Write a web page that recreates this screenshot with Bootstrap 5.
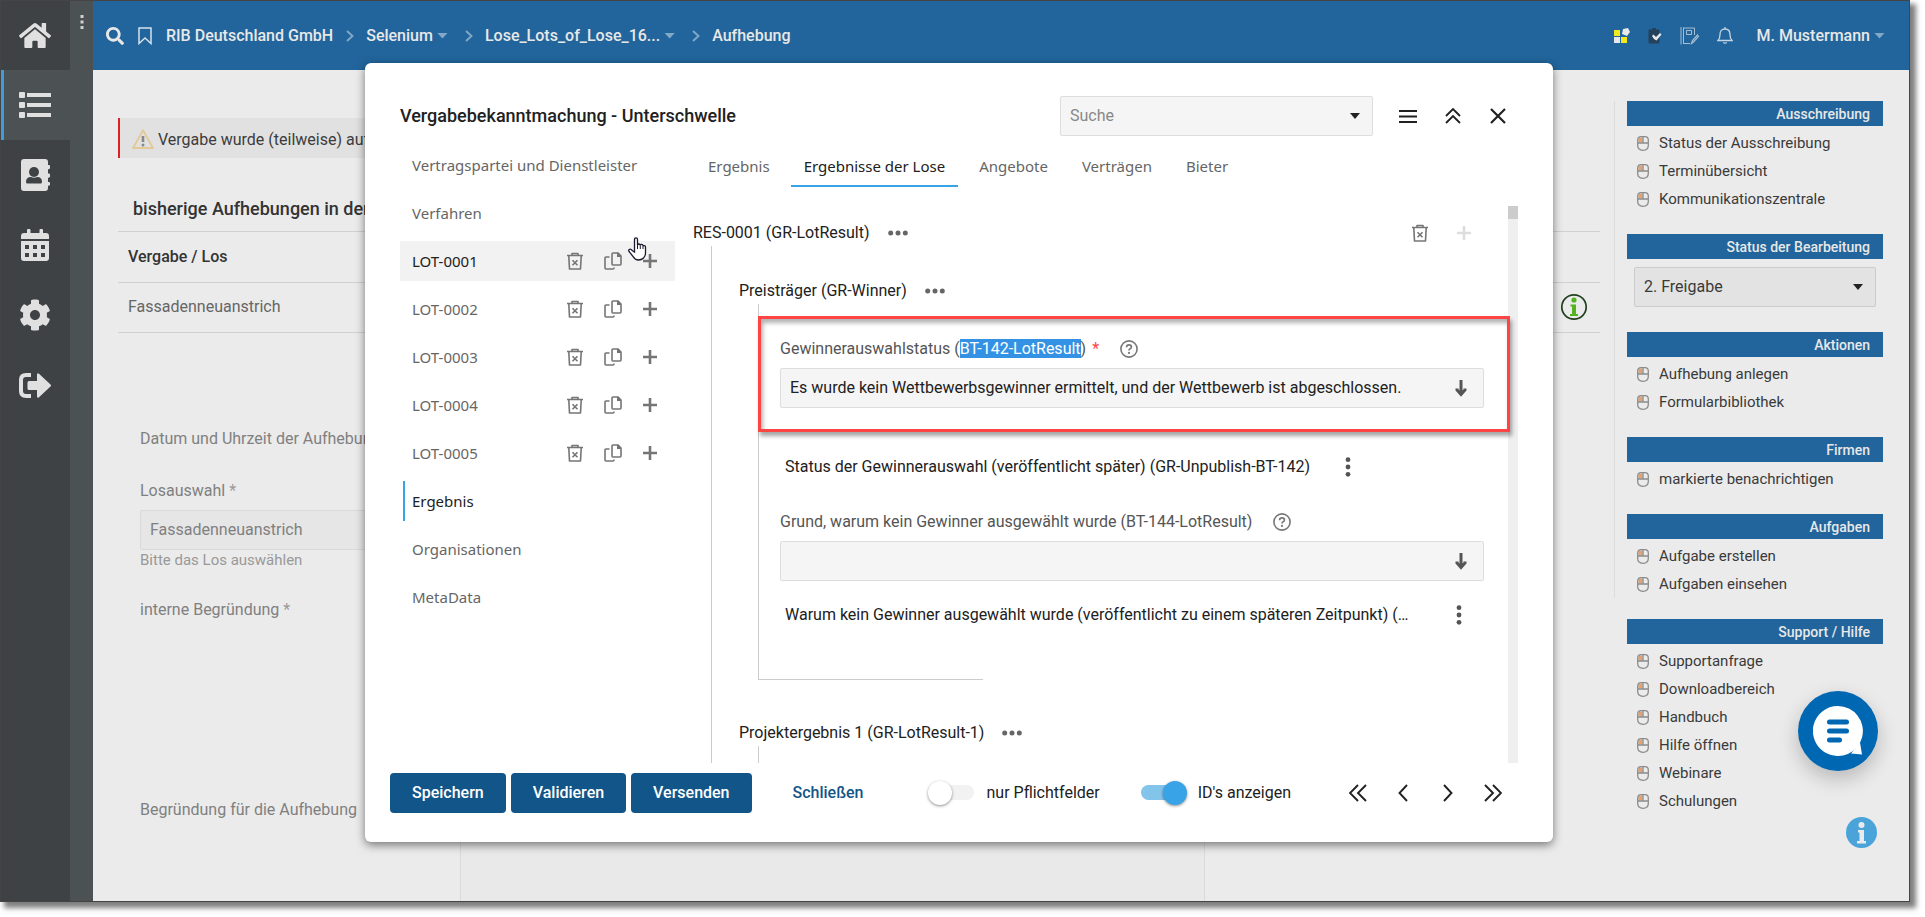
<!DOCTYPE html>
<html lang="de">
<head>
<meta charset="utf-8">
<meta name="viewport" content="width=device-width, initial-scale=1">
<title>Vergabebekanntmachung - Unterschwelle</title>
<link href="https://cdn.jsdelivr.net/npm/bootstrap@5.3.0/dist/css/bootstrap.min.css" rel="stylesheet">
<style>
  :root { --brand: #21659c; --deep: #125588; --sky: #38a3e6; }
  body { font: 400 16px/20px Roboto, sans-serif; color: #212121; background: #fff; }
  a { color: inherit; text-decoration: none; }
  svg { display: block; flex: none; }
  button { border: 0; background: none; padding: 0; color: inherit; }

  .app { position: relative; min-height: calc(100vh - 15px); margin: 0 15px 15px 0; border: 1px solid #444; background: #ebebeb; box-shadow: 5px 5px 5px 1px rgba(0,0,0,.5); }
  .rail { width: 69px; background: #3e4244; color: #e0e0e0; }
  .rail a { height: 70px; border-left: 3px solid transparent; padding-right: 4px; }
  .rail a:first-child { height: 69px; }
  .rail a.current { background: #4c5154; border-color: #419dd8; }
  .grip { width: 23px; background: #4c5154; color: #d0d0d0; padding-top: 14px; }
  .main-col { min-width: 0; }
  .topbar { height: 69px; background: var(--brand); color: #e8e8e8; padding: 0 24px 0 13px; font-weight: 500; }
  .crumbs { gap: 12px; }
  .crumbs > a { margin-right: 1px; }
  .tri { width: 11px; height: 6px; background: #82a8c8; clip-path: polygon(0 0, 100% 0, 50% 100%); }
  .toolset { gap: 18px; }

  .content { padding: 48px 14px 0 25px; }
  .notice { height: 40px; border-left: 2px solid #e02020; padding: 2px 0 0 12px; background: linear-gradient(90deg, #e1e1e1 40%, #ebebeb 98%); color: #3c3c3c; }
  .notice span { padding-top: 2px; }
  .content h2 { font: 500 18px/24px Roboto, sans-serif; color: #333; margin: 39px 0 0; padding: 0 0 10px 15px; border-bottom: 1px solid #d0d0d0; }
  .awards { color: #666; margin: 0; }
  .awards th, .awards td { height: 50px; padding: 0 10px; border-bottom: 1px solid #d0d0d0; vertical-align: middle; background: none; }
  .awards th { color: #333; font-weight: 500; }
  .awards td { color: #666; padding-right: 12px; }
  .form-a { flex: 308 1 0; min-width: 0; padding: 96px 12px 0 22px; border-right: 1px solid #dadada; color: #808080; white-space: nowrap; }
  .form-b { flex: 743 1 0; background: #e9e9e9; border-right: 1px solid #dadada; }
  .form-c { flex: 395 1 0; }
  .form-a .when { margin-bottom: 32px; }
  .form-a label { display: block; margin-bottom: 9px; }
  .form-a .tip { font-size: 15px; color: #999; margin-bottom: 30px; }
  .form-a .reason { margin-bottom: 180px; }
  .pick { height: 40px; padding: 0 40px 0 9px; border: 1px solid #ddd; border-radius: 2px; background-color: #f5f5f5; color: #212121; font-size: 16px; line-height: 20px; background-size: 12px 18px; background-position: right 16px center;
    background-image: url("data:image/svg+xml,%3Csvg xmlns='http://www.w3.org/2000/svg' viewBox='0 0 12 18'%3E%3Cpath d='M6 1v13M2 9.500v1.500l4 4.500 4-4.500v-1.500' fill='none' stroke='%23555' stroke-width='3'/%3E%3C/svg%3E"); }
  .pick-tri { background-size: 10px 6px; background-position: right 12px center; background-image: url("data:image/svg+xml,%3Csvg xmlns='http://www.w3.org/2000/svg' viewBox='0 0 10 6'%3E%3Cpath d='M0 0h10L5 6z' fill='%23222'/%3E%3C/svg%3E"); }
  .form-a .pick { background-color: #e6e6e6; border-color: #d9d9d9; color: #808080; background-image: none; }

  .side { width: 295px; padding: 31px 26px 0 0; color: #3a3a3a; font-size: 15px; }
  .side-main { border-left: 1px solid #dcdcdc; padding-left: 12px; }
  .side-rest { padding: 8px 0 0 13px; }
  .side h3 { font: 500 14px/27px Roboto, sans-serif; height: 25px; background: var(--brand); color: #e8e8e8; text-align: right; padding-right: 13px; margin: 0; }
  .side ul { list-style: none; margin: 0 0 21px; padding: 3px 0 0 10px; }
  .side .tight { margin-bottom: 13px; }
  .side li a { display: flex; align-items: center; gap: 10px; height: 28px; }
  .side .pick { width: 242px; margin: 8px 0 25px 7px; background-color: #e3e3e3; border-color: #ccc; color: #3a3a3a; }
  .chat { position: absolute; right: 31px; bottom: 130px; width: 80px; height: 80px; border-radius: 50%; background: #0067b3; box-shadow: 0 8px 20px rgba(0,0,0,.22); }
  .hint { position: absolute; right: 32px; bottom: 53px; }

  .stage { position: absolute; inset: 0; padding: 62px 0 59px 8px; }
  .sheet { width: 1188px; max-width: 94%; background: #fff; border-radius: 6px; box-shadow: 0 3px 10px rgba(0,0,0,.5); padding-bottom: 29px; }
  .sheet-head { padding: 33px 33px 0 35px; }
  .sheet-head h1 { font: 500 18px/24px Roboto, sans-serif; margin: 0; }
  .tool { width: 45px; height: 40px; display: flex; align-items: center; justify-content: center; }
  .sheet-head .pick { width: 313px; margin-right: 12px; color: #888; }
  .sheet-body { padding: 9px 35px 0 35px; gap: 18px; }
  .steps { width: 275px; font-family: "Noto Sans", sans-serif; font-size: 15px; color: #666; }
  .steps > div { height: 40px; margin-bottom: 8px; padding: 0 18px 1px 12px; position: relative; }
  .steps .hover { background: #f2f2f2; color: #212121; }
  .steps .here { color: #212121; }
  .steps .here::before { content: ""; position: absolute; left: 3px; top: 0; width: 2px; height: 40px; background: var(--sky); }
  .acts { gap: 21px; color: #757575; }
  .hand { position: absolute; left: 227px; top: -4px; }
  .tabbar { padding: 2px 0 0 2px; gap: 8px; font-family: "Noto Sans", sans-serif; font-size: 15px; color: #666; }
  .tabbar a { height: 40px; line-height: 38px; padding: 0 13px; border-bottom: 2px solid transparent; }
  .tabbar a.on { color: #212121; border-color: var(--sky); }
  .pane { margin-top: 19px; padding-top: 0; }
  .track { width: 10px; background: #efefef; }
  .thumb { height: 13px; background: #ccc; }
  .group { height: 28px; gap: 18px; padding-top: 2px; }
  .top-group { margin-top: 12px; }
  .next-group { margin-top: 38px; }
  .grey { color: #757575; }
  .pale { color: #ddd; margin: 0 37px 0 11px; }
  .lvl1 { margin-left: 18px; border-left: 1px solid #ccc; padding-top: 30px; }
  .lvl1 > .group { padding-left: 27px; }
  .lvl2 { margin-left: 46px; border-left: 1px solid #ccc; }
  .marked { position: relative; margin: 12px -2px 25px -1px; padding: 20px 23px 21px 19px; border: 3px solid #f44; box-shadow: 2px 4px 4px rgba(0,0,0,.35), inset 2px 4px 4px rgba(0,0,0,.3); }
  .namerow { gap: 21px; margin-bottom: 9px; }
  .fieldname { color: #555; }
  .picked { background: #3392e3; color: #fff; }
  .must { color: #f44; margin-left: 2px; }
  .plain { padding-left: 26px; gap: 35px; }
  .plain-wide { padding-right: 46px; justify-content: space-between; gap: 12px; }
  .grund { padding: 35px 24px 24px 21px; }
  .floor { width: 224px; height: 55px; border-bottom: 1px solid #ccc; }
  .sheet-foot { padding: 10px 38px 0 25px; gap: 5px; }
  .act { height: 40px; padding: 0 22px; border-radius: 4px; background: var(--deep); color: #fff; font-weight: 500; }
  .act:hover { background: #0d4570; color: #fff; }
  .act.bare { background: none; color: var(--deep); margin: 0 37px 0 14px; }
  .flip { gap: 11px; margin-right: 34px; }
  .flip input { appearance: none; margin: 0; width: 48px; height: 24px; display: flex; align-items: center; background: none; position: relative; }
  .flip input::after { content: ""; position: absolute; left: 2px; right: 2px; top: 4px; height: 15px; border-radius: 8px; background: #f2f2f2; }
  .flip input::before { content: ""; z-index: 1; width: 24px; height: 24px; border-radius: 50%; background: #fff; box-shadow: 0 1px 3px rgba(0,0,0,.45); }
  .flip input:checked { justify-content: flex-end; }
  .flip input:checked::after { background: #82c4ea; }
  .flip input:checked::before { background: var(--sky); }
</style>
</head>
<body>
<svg width="0" height="0" class="position-absolute" aria-hidden="true">
  <defs>
    <symbol id="bin" viewBox="0 0 16 18"><path d="M0 3.500h16M5 3V1.500h6V3M1.800 4l.7 13h11l.7-13" fill="none" stroke="currentColor" stroke-width="1.600" stroke-linejoin="round"/><path d="M5.500 8.200l5 5M10.500 8.200l-5 5" stroke="currentColor" stroke-width="1.600"/></symbol>
    <symbol id="dup" viewBox="0 0 18 18"><path d="M9 1h5l3 3v8q0 1-1 1H9q-1 0-1-1V2q0-1 1-1z" fill="none" stroke="currentColor" stroke-width="1.600"/><path d="M13 .8h1.500L17.200 4v1H13z" fill="currentColor"/><path d="M5.500 5H2Q1 5 1 6v10q0 1 1 1h7q1 0 1-1v-.5" fill="none" stroke="currentColor" stroke-width="1.600"/></symbol>
    <symbol id="add" viewBox="0 0 14 14"><path d="M7 0v14M0 7h14" stroke="currentColor" stroke-width="2.600"/></symbol>
    <symbol id="dots" viewBox="0 0 20 6"><g fill="#666"><circle cx="2.700" cy="3" r="2.500"/><circle cx="10" cy="3" r="2.500"/><circle cx="17.300" cy="3" r="2.500"/></g></symbol>
    <symbol id="vdots" viewBox="0 0 6 20"><g fill="#555"><circle cx="3" cy="2.700" r="2.400"/><circle cx="3" cy="10" r="2.400"/><circle cx="3" cy="17.300" r="2.400"/></g></symbol>
    <symbol id="help" viewBox="0 0 18 18"><circle cx="9" cy="9" r="8.100" fill="none" stroke="#777" stroke-width="1.600"/><path d="M6.600 7.200q0-2.300 2.400-2.300t2.400 2q0 1.300-1.300 1.900-1.100.5-1.100 1.700" fill="none" stroke="#777" stroke-width="1.700"/><circle cx="9" cy="12.900" r="1.100" fill="#777"/></symbol>
    <symbol id="mouse" viewBox="0 0 12 15"><path d="M1.500 1.500H5.500V6.500H1.500z" fill="#eaa06a"/><path d="M.7 4Q.7.700 4 .7h4q3.300 0 3.300 3.300v5.500q0 4.800-5.300 4.800T.7 9.500zM.7 7h10.600M6 .7V7" fill="none" stroke="#8c8c8c" stroke-width="1.300"/></symbol>
    <symbol id="next" viewBox="0 0 8 12"><path d="M1 1l5.500 5L1 11" fill="none" stroke="#82a8c8" stroke-width="1.900"/></symbol>
  </defs>
</svg>

<div class="app d-flex">
  <nav class="rail d-flex flex-column flex-shrink-0" aria-label="Hauptmenü">
    <a href="#" class="d-flex align-items-center justify-content-center" aria-label="Start"><svg width="32" height="29" viewBox="0 0 576 512" fill="currentColor"><path d="M280.370 148.260L96 300.110V464a16 16 0 0 0 16 16l112.060-.29a16 16 0 0 0 15.920-16V368a16 16 0 0 1 16-16h64a16 16 0 0 1 16 16v95.640a16 16 0 0 0 16 16.050L464 480a16 16 0 0 0 16-16V300L295.670 148.260a12.190 12.190 0 0 0-15.300 0zM571.600 251.470L488 182.560V44.050a12 12 0 0 0-12-12h-56a12 12 0 0 0-12 12v72.610L318.470 43a48 48 0 0 0-61 0L4.340 251.470a12 12 0 0 0-1.600 16.900l25.500 31A12 12 0 0 0 45.150 301l235.220-193.740a12.190 12.190 0 0 1 15.300 0L530.900 301a12 12 0 0 0 16.900-1.600l25.500-31a12 12 0 0 0-1.700-16.930z"/></svg></a>
    <a href="#" class="current d-flex align-items-center justify-content-center" aria-label="Liste"><svg width="32" height="26" viewBox="0 0 32 26" fill="currentColor"><path d="M1 0h4q1 0 1 1v4q0 1-1 1H1Q0 6 0 5V1q0-1 1-1zM1 10h4q1 0 1 1v4q0 1-1 1H1q-1 0-1-1v-4q0-1 1-1zM1 20h4q1 0 1 1v4q0 1-1 1H1q-1 0-1-1v-4q0-1 1-1zM8 1h24v4H8zM8 11h24v4H8zM8 21h24v4H8z"/></svg></a>
    <a href="#" class="d-flex align-items-center justify-content-center" aria-label="Adressbuch"><svg width="29" height="32" viewBox="0 0 29 32"><path d="M3 0h21q3 0 3 3v3h1q1 0 1 1v2.500l-2 1v4h1q1 0 1 1V18l-2 1v4h1q1 0 1 1v2l-2 1v2q0 3-3 3H3q-3 0-3-3V3q0-3 3-3z" fill="currentColor"/><circle cx="13" cy="13" r="5" fill="#3e4244"/><path d="M5 23q0-5 5-5 3 1.300 6 0 5 0 5 5 0 1.500-1.500 1.500h-13Q5 24.500 5 23z" fill="#3e4244"/></svg></a>
    <a href="#" class="d-flex align-items-center justify-content-center" aria-label="Kalender"><svg width="28" height="32" viewBox="0 0 28 32"><path d="M7 0h1.500q1 0 1 1v3h9V1q0-1 1-1H21q1 0 1 1v3h3q3 0 3 3v3H0V7q0-3 3-3h3V1q0-1 1-1zM0 12h28v17q0 3-3 3H3q-3 0-3-3z" fill="currentColor"/><path d="M4 16h4v4H4zM12 16h4v4h-4zM20 16h4v4h-4zM4 24h4v4H4zM12 24h4v4h-4zM20 24h4v4h-4z" fill="#3e4244"/></svg></a>
    <a href="#" class="d-flex align-items-center justify-content-center" aria-label="Einstellungen"><svg width="32" height="32" viewBox="0 0 512 512" fill="currentColor"><path d="M487.400 315.700l-42.600-24.600c4.300-23.200 4.300-47 0-70.200l42.600-24.600c4.900-2.800 7.100-8.600 5.500-14-11.100-35.600-30-67.800-54.700-94.600-3.800-4.100-10-5.100-14.800-2.300L380.800 110c-17.900-15.400-38.500-27.300-60.800-35.100V25.800c0-5.600-3.900-10.500-9.400-11.700-36.700-8.200-74.300-7.800-109.200 0-5.500 1.200-9.400 6.100-9.400 11.700V75c-22.200 7.900-42.800 19.800-60.800 35.100L88.700 85.500c-4.900-2.800-11-1.900-14.800 2.300-24.700 26.700-43.600 58.900-54.700 94.600-1.700 5.400.6 11.200 5.500 14L67.300 221c-4.300 23.200-4.300 47 0 70.200l-42.600 24.600c-4.900 2.800-7.100 8.600-5.500 14 11.100 35.600 30 67.800 54.700 94.600 3.800 4.100 10 5.100 14.800 2.300l42.600-24.600c17.900 15.400 38.500 27.300 60.800 35.100v49.200c0 5.600 3.900 10.500 9.400 11.700 36.700 8.200 74.300 7.800 109.200 0 5.500-1.200 9.400-6.100 9.400-11.700v-49.200c22.200-7.900 42.800-19.800 60.800-35.100l42.600 24.600c4.900 2.800 11 1.900 14.800-2.300 24.700-26.700 43.600-58.900 54.700-94.600 1.500-5.500-.7-11.300-5.600-14.100zM256 336c-44.100 0-80-35.900-80-80s35.900-80 80-80 80 35.900 80 80-35.900 80-80 80z"/></svg></a>
    <a href="#" class="d-flex align-items-center justify-content-center" aria-label="Abmelden"><svg width="32" height="25" viewBox="0 0 32 25"><path d="M12 2H7Q2 2 2 7v11q0 5 5 5h5" fill="none" stroke="currentColor" stroke-width="4"/><path d="M10 8h8V1.500Q18.500-.5 20 .8l11.500 10.700q1 1 0 2L20 24.200q-1.500 1.300-2-.7V17h-8q-1.500 0-1.500-1.500v-6Q8.500 8 10 8z" fill="currentColor"/></svg></a>
  </nav>
  <div class="grip flex-shrink-0 d-flex justify-content-center"><svg width="4" height="14" viewBox="0 0 4 14" fill="currentColor"><path d="M.5 0h3v3h-3zM.5 5.500h3v3h-3zM.5 11h3v3h-3z"/></svg></div>

  <div class="main-col flex-grow-1 d-flex flex-column">
    <header class="topbar d-flex align-items-center justify-content-between flex-shrink-0">
      <div class="crumbs d-flex align-items-center">
        <button type="button" aria-label="Suchen"><svg width="18" height="18" viewBox="0 0 512 512" fill="currentColor"><path d="M505 442.700L405.300 343c-4.500-4.500-10.600-7-17-7H372c27.600-35.300 44-79.700 44-128C416 93.100 322.900 0 208 0S0 93.100 0 208s93.100 208 208 208c48.300 0 92.700-16.400 128-44v16.300c0 6.400 2.500 12.500 7 17l99.700 99.700c9.400 9.400 24.600 9.400 33.900 0l28.300-28.300c9.400-9.400 9.400-24.600.1-34zM208 336c-70.700 0-128-57.200-128-128 0-70.700 57.200-128 128-128 70.700 0 128 57.200 128 128 0 70.700-57.200 128-128 128z"/></svg></button>
        <button type="button" aria-label="Lesezeichen"><svg width="18" height="18" viewBox="0 0 18 18"><path d="M3 1h12v15.500l-6-5.500-6 5.500z" fill="none" stroke="#d5e1ec" stroke-width="1.500"/></svg></button>
        <a href="#">RIB Deutschland GmbH</a>
        <svg width="8" height="12"><use href="#next"/></svg>
        <a href="#" class="d-flex align-items-center gap-1">Selenium <span class="tri"></span></a>
        <svg class="ms-1" width="8" height="12"><use href="#next"/></svg>
        <a href="#" class="d-flex align-items-center gap-1">Lose_Lots_of_Lose_16... <span class="tri"></span></a>
        <svg class="ms-1" width="8" height="12"><use href="#next"/></svg>
        <a href="#">Aufhebung</a>
      </div>
      <div class="d-flex align-items-center gap-4">
        <div class="toolset d-flex align-items-center">
          <svg width="16" height="16" viewBox="0 0 16 16"><path d="M0 2h6v6H0zM7 9h6v6H7z" fill="#f2ea1c"/><path d="M0 9h6v6H0z" fill="#e8e8e8"/><path d="M9 1l5-1 2 4-3 4-5-2z" fill="#e8e8e8"/></svg>
          <svg width="14" height="16" viewBox="0 0 14 16"><path d="M1.500 1.500H4V0h4v1.500h2.500q1 0 1 1V14q0 1.500-1.500 1.500H2Q.5 15.500.5 14V2.500q0-1 1-1z" fill="#24425c"/><path d="M4 8l1.500-1.500L8 9l4-4 1.500 1.500-5 6L6 11z" fill="#e8e8e8"/></svg>
          <svg width="19" height="18" viewBox="0 0 19 18" fill="none" stroke="#a9bfd1"><path d="M1 0v17.500M3.500.5v16.500M3.500 1h11v7M4 16.500h6M6.500 3.500h5v4h-5z"/><path d="M11.500 16.500l1-3 5-5.500 1 1.500-5 5.500z" stroke-width="1.200"/></svg>
          <svg width="16" height="17" viewBox="0 0 16 17" fill="none" stroke="#c5d5e3" stroke-width="1.300"><path d="M1 13.500q2-2 2-6Q3 2 8 2t5 5.500q0 4 2 6zM8 0v2M6.300 15.500q1.700 1.300 3.400 0"/></svg>
        </div>
        <a href="#" class="d-flex align-items-center gap-1">M. Mustermann <span class="tri"></span></a>
      </div>
    </header>

    <div class="d-flex flex-grow-1">
      <main class="content flex-grow-1 d-flex flex-column">
        <div class="notice d-flex align-items-center gap-1">
          <svg width="22" height="20" viewBox="0 0 22 20"><path d="M11 1.200L21 19H1z" fill="none" stroke="#e4c998" stroke-width="1.800" stroke-linejoin="round"/><path d="M11 7v6" stroke="#888" stroke-width="2.600"/><circle cx="11" cy="16" r="1.500" fill="#888"/></svg>
          <span>Vergabe wurde (teilweise) aufgehoben</span>
        </div>
        <h2>bisherige Aufhebungen in der</h2>
        <table class="awards w-100">
          <thead><tr><th scope="col">Vergabe / Los</th><th scope="col"></th></tr></thead>
          <tbody><tr><td>Fassadenneuanstrich</td><td><svg class="ms-auto" width="28" height="28" viewBox="0 0 28 28"><circle cx="14" cy="14" r="12.200" fill="none" stroke="#22401f" stroke-width="1.700"/><circle cx="14" cy="7" r="2.600" fill="#54b41f"/><path d="M10.500 11.500h5.500v9.500h2v2h-8v-2h2v-7.500h-1.500z" fill="#54b41f"/></svg></td></tr></tbody>
        </table>
        <div class="d-flex flex-grow-1">
          <div class="form-a">
            <div class="when">Datum und Uhrzeit der Aufhebung</div>
            <label for="los">Losauswahl <span class="opacity-75">*</span></label>
            <select id="los" class="form-select pick" disabled><option>Fassadenneuanstrich</option></select>
            <div class="tip">Bitte das Los auswählen</div>
            <div class="reason">interne Begründung <span class="opacity-75">*</span></div>
            <div>Begründung für die Aufhebung</div>
          </div>
          <div class="form-b"></div>
          <div class="form-c"></div>
        </div>
      </main>

      <aside class="side flex-shrink-0">
        <div class="side-main">
          <h3>Ausschreibung</h3>
          <ul>
            <li><a href="#"><svg width="12" height="15"><use href="#mouse"/></svg>Status der Ausschreibung</a></li>
            <li><a href="#"><svg width="12" height="15"><use href="#mouse"/></svg>Terminübersicht</a></li>
            <li><a href="#"><svg width="12" height="15"><use href="#mouse"/></svg>Kommunikationszentrale</a></li>
          </ul>
          <h3>Status der Bearbeitung</h3>
          <select class="form-select pick pick-tri" aria-label="Status der Bearbeitung"><option>2. Freigabe</option></select>
          <h3>Aktionen</h3>
          <ul>
            <li><a href="#"><svg width="12" height="15"><use href="#mouse"/></svg>Aufhebung anlegen</a></li>
            <li><a href="#"><svg width="12" height="15"><use href="#mouse"/></svg>Formularbibliothek</a></li>
          </ul>
          <h3>Firmen</h3>
          <ul>
            <li><a href="#"><svg width="12" height="15"><use href="#mouse"/></svg>markierte benachrichtigen</a></li>
          </ul>
          <h3>Aufgaben</h3>
          <ul class="tight">
            <li><a href="#"><svg width="12" height="15"><use href="#mouse"/></svg>Aufgabe erstellen</a></li>
            <li><a href="#"><svg width="12" height="15"><use href="#mouse"/></svg>Aufgaben einsehen</a></li>
          </ul>
        </div>
        <div class="side-rest">
          <h3>Support / Hilfe</h3>
          <ul>
            <li><a href="#"><svg width="12" height="15"><use href="#mouse"/></svg>Supportanfrage</a></li>
            <li><a href="#"><svg width="12" height="15"><use href="#mouse"/></svg>Downloadbereich</a></li>
            <li><a href="#"><svg width="12" height="15"><use href="#mouse"/></svg>Handbuch</a></li>
            <li><a href="#"><svg width="12" height="15"><use href="#mouse"/></svg>Hilfe öffnen</a></li>
            <li><a href="#"><svg width="12" height="15"><use href="#mouse"/></svg>Webinare</a></li>
            <li><a href="#"><svg width="12" height="15"><use href="#mouse"/></svg>Schulungen</a></li>
          </ul>
        </div>
      </aside>
    </div>
  </div>

  <div class="stage d-flex justify-content-center">
    <section class="sheet d-flex flex-column" role="dialog" aria-labelledby="dlg">
      <div class="sheet-head d-flex align-items-center">
        <h1 id="dlg" class="me-auto">Vergabebekanntmachung - Unterschwelle</h1>
        <select class="form-select pick pick-tri" aria-label="Suche"><option>Suche</option></select>
        <button type="button" class="tool" aria-label="Menü"><svg width="18" height="14" viewBox="0 0 18 14"><path d="M0 2h18M0 7.500h18M0 13h18" stroke="#212121" stroke-width="2.200"/></svg></button>
        <button type="button" class="tool" aria-label="Zuklappen"><svg width="16" height="16" viewBox="0 0 16 16" fill="none" stroke="#212121" stroke-width="1.800"><path d="M1 8l7-7 7 7M1 15l7-7 7 7"/></svg></button>
        <button type="button" class="tool" aria-label="Schließen"><svg width="16" height="16" viewBox="0 0 16 16" fill="none" stroke="#212121" stroke-width="2.200"><path d="M1 1l14 14M15 1L1 15"/></svg></button>
      </div>

      <div class="sheet-body d-flex flex-grow-1">
        <nav class="steps flex-shrink-0" aria-label="Abschnitte">
          <div class="d-flex align-items-center"><a href="#">Vertragspartei und Dienstleister</a></div>
          <div class="d-flex align-items-center"><a href="#">Verfahren</a></div>
          <div class="hover d-flex align-items-center justify-content-between"><a href="#">LOT-0001</a><span class="acts d-flex align-items-center"><button type="button" aria-label="Löschen"><svg width="16" height="18"><use href="#bin"/></svg></button><button type="button" aria-label="Kopieren"><svg width="18" height="18"><use href="#dup"/></svg></button><button type="button" aria-label="Hinzufügen"><svg width="14" height="14"><use href="#add"/></svg></button></span>
            <svg class="hand" width="20" height="25" viewBox="0 0 20 25"><path d="M7.500 15V2.500Q7.500.8 9 .8t1.500 1.700V8q.3-1 1.400-1T13.300 8.400q.3-1 1.300-1 1.200 0 1.500 1.300 2.400-.7 2.400 1.600V16q0 3-2 5t-5 2q-3.500 0-5-3L2 14.500q-.8-1.700.6-2.200 1.400-.4 2.600 1.200z" fill="#fff" stroke="#1a1a2e" stroke-width="1.300"/><path d="M10.500 8v4M13.300 8.400V12M16 9v3" stroke="#1a1a2e"/></svg></div>
          <div class="d-flex align-items-center justify-content-between"><a href="#">LOT-0002</a><span class="acts d-flex align-items-center"><button type="button" aria-label="Löschen"><svg width="16" height="18"><use href="#bin"/></svg></button><button type="button" aria-label="Kopieren"><svg width="18" height="18"><use href="#dup"/></svg></button><button type="button" aria-label="Hinzufügen"><svg width="14" height="14"><use href="#add"/></svg></button></span></div>
          <div class="d-flex align-items-center justify-content-between"><a href="#">LOT-0003</a><span class="acts d-flex align-items-center"><button type="button" aria-label="Löschen"><svg width="16" height="18"><use href="#bin"/></svg></button><button type="button" aria-label="Kopieren"><svg width="18" height="18"><use href="#dup"/></svg></button><button type="button" aria-label="Hinzufügen"><svg width="14" height="14"><use href="#add"/></svg></button></span></div>
          <div class="d-flex align-items-center justify-content-between"><a href="#">LOT-0004</a><span class="acts d-flex align-items-center"><button type="button" aria-label="Löschen"><svg width="16" height="18"><use href="#bin"/></svg></button><button type="button" aria-label="Kopieren"><svg width="18" height="18"><use href="#dup"/></svg></button><button type="button" aria-label="Hinzufügen"><svg width="14" height="14"><use href="#add"/></svg></button></span></div>
          <div class="d-flex align-items-center justify-content-between"><a href="#">LOT-0005</a><span class="acts d-flex align-items-center"><button type="button" aria-label="Löschen"><svg width="16" height="18"><use href="#bin"/></svg></button><button type="button" aria-label="Kopieren"><svg width="18" height="18"><use href="#dup"/></svg></button><button type="button" aria-label="Hinzufügen"><svg width="14" height="14"><use href="#add"/></svg></button></span></div>
          <div class="here d-flex align-items-center"><a href="#">Ergebnis</a></div>
          <div class="d-flex align-items-center"><a href="#">Organisationen</a></div>
          <div class="d-flex align-items-center"><a href="#">MetaData</a></div>
        </nav>

        <div class="flex-grow-1 d-flex flex-column">
          <nav class="tabbar d-flex" aria-label="Reiter">
            <a href="#">Ergebnis</a><a href="#" class="on">Ergebnisse der Lose</a><a href="#">Angebote</a><a href="#">Verträgen</a><a href="#">Bieter</a>
          </nav>
          <div class="pane d-flex flex-grow-1">
            <div class="flex-grow-1 d-flex flex-column">
              <div class="group top-group d-flex align-items-center">RES-0001 (GR-LotResult) <svg width="20" height="6"><use href="#dots"/></svg>
                <button type="button" class="grey ms-auto" aria-label="Löschen"><svg width="16" height="18"><use href="#bin"/></svg></button>
                <button type="button" class="pale" disabled aria-label="Hinzufügen"><svg width="14" height="14"><use href="#add"/></svg></button>
              </div>
              <div class="lvl1 flex-grow-1 d-flex flex-column">
                <div class="group d-flex align-items-center">Preisträger (GR-Winner) <svg width="20" height="6"><use href="#dots"/></svg></div>
                <div class="lvl2">
                  <div class="marked">
                    <div class="namerow d-flex align-items-center">
                      <label for="status" class="fieldname">Gewinnerauswahlstatus (<span class="picked">BT-142-LotResult</span>) <span class="must">*</span></label>
                      <svg width="18" height="18"><use href="#help"/></svg>
                    </div>
                    <select id="status" class="form-select pick"><option>Es wurde kein Wettbewerbsgewinner ermittelt, und der Wettbewerb ist abgeschlossen.</option></select>
                  </div>
                  <div class="plain d-flex align-items-center">Status der Gewinnerauswahl (veröffentlicht später) (GR-Unpublish-BT-142) <svg width="6" height="20"><use href="#vdots"/></svg></div>
                  <div class="grund">
                    <div class="namerow d-flex align-items-center">
                      <label for="grund" class="fieldname">Grund, warum kein Gewinner ausgewählt wurde (BT-144-LotResult)</label>
                      <svg width="18" height="18"><use href="#help"/></svg>
                    </div>
                    <select id="grund" class="form-select pick"><option></option></select>
                  </div>
                  <div class="plain plain-wide d-flex align-items-center"><span>Warum kein Gewinner ausgewählt wurde (veröffentlicht zu einem späteren Zeitpunkt) (…</span><svg width="6" height="20"><use href="#vdots"/></svg></div>
                  <div class="floor"></div>
                </div>
                <div class="group next-group d-flex align-items-center">Projektergebnis 1 (GR-LotResult-1) <svg width="20" height="6"><use href="#dots"/></svg></div>
                <div class="lvl2 flex-grow-1"></div>
              </div>
            </div>
            <div class="track flex-shrink-0"><div class="thumb"></div></div>
          </div>
        </div>
      </div>

      <div class="sheet-foot d-flex align-items-center">
        <button type="button" class="act">Speichern</button>
        <button type="button" class="act">Validieren</button>
        <button type="button" class="act">Versenden</button>
        <button type="button" class="act bare">Schließen</button>
        <label class="flip d-flex align-items-center"><input type="checkbox" role="switch">nur Pflichtfelder</label>
        <label class="flip d-flex align-items-center"><input type="checkbox" role="switch" checked>ID's anzeigen</label>
        <div class="ms-auto d-flex">
          <button type="button" class="tool" aria-label="Erste"><svg width="18" height="18" viewBox="0 0 18 18" fill="none" stroke="#212121" stroke-width="1.900"><path d="M9 1L1 9l8 8M17 1L9 9l8 8"/></svg></button>
          <button type="button" class="tool" aria-label="Zurück"><svg width="10" height="18" viewBox="0 0 10 18" fill="none" stroke="#212121" stroke-width="1.900"><path d="M9 1L1.500 9 9 17"/></svg></button>
          <button type="button" class="tool" aria-label="Weiter"><svg width="10" height="18" viewBox="0 0 10 18" fill="none" stroke="#212121" stroke-width="1.900"><path d="M1 1l7.500 8L1 17"/></svg></button>
          <button type="button" class="tool" aria-label="Letzte"><svg width="18" height="18" viewBox="0 0 18 18" fill="none" stroke="#212121" stroke-width="1.900"><path d="M1 1l8 8-8 8M9 1l8 8-8 8"/></svg></button>
        </div>
      </div>
    </section>
  </div>

  <button type="button" class="chat d-flex align-items-center justify-content-center" aria-label="Chat"><svg width="50" height="50" viewBox="0 0 50 50"><path d="M25 0a25 25 0 1 1-12 47A25 25 0 0 1 25 0z" fill="#fff"/><path d="M38 47.500l11 1-2-12z" fill="#fff"/><path d="M16.500 16h17M16.500 25h17M16.500 34h10" stroke="#0067b3" stroke-width="5" stroke-linecap="round"/></svg></button>
  <a href="#" class="hint" aria-label="Info"><svg width="31" height="31" viewBox="0 0 31 31"><circle cx="15.500" cy="15.500" r="15.500" fill="#4aa3d9"/><circle cx="15.500" cy="8" r="3" fill="#ebebeb"/><path d="M12 13h6v11h2v2.500h-9V24h2.500v-8.500H12z" fill="#ebebeb"/></svg></a>
</div>
<script src="https://cdn.jsdelivr.net/npm/bootstrap@5.3.0/dist/js/bootstrap.bundle.min.js"></script>
</body>
</html>
